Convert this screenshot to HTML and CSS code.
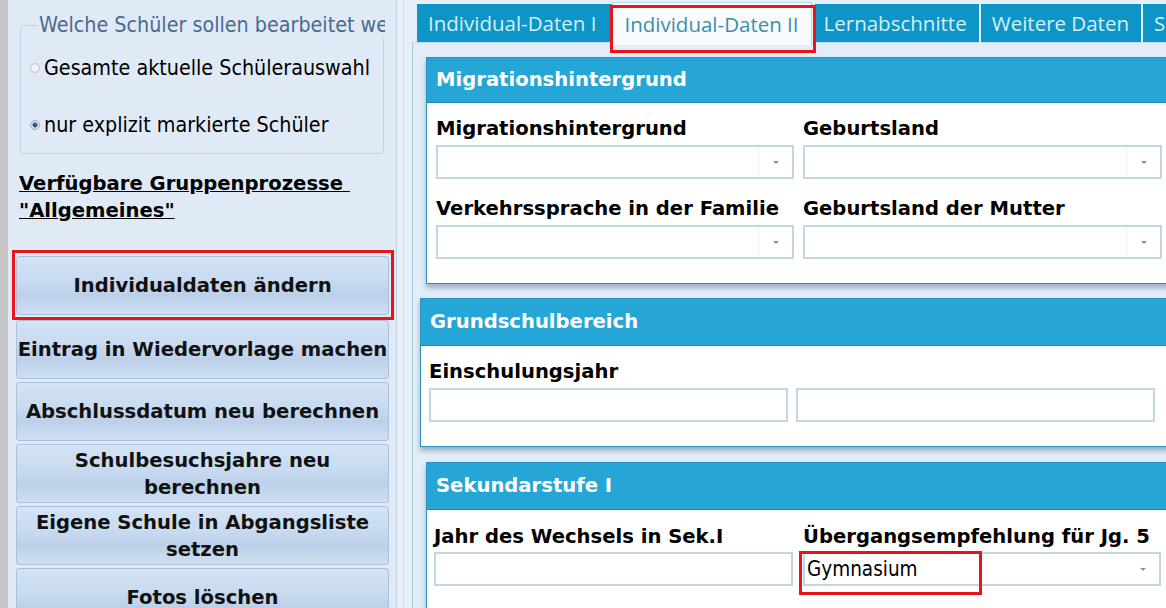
FILE: index.html
```html
<!DOCTYPE html>
<html lang="de">
<head>
    <meta charset="UTF-8">
    <meta name="viewport" content="width=device-width, initial-scale=1.0">
    <title>Gruppenprozesse - Individualdaten</title>
    <link rel="stylesheet" href="styles.css">
</head>
<body>
    <div class="side">
        <fieldset class="choose">
            <legend>Welche Schüler sollen bearbeitet werden?</legend>
            <div class="radio-row"><span class="radio"></span>Gesamte aktuelle Schülerauswahl</div>
            <div class="radio-row"><span class="radio checked"></span>nur explizit markierte Schüler</div>
        </fieldset>
        <h2 class="proc-title">Verfügbare Gruppenprozesse&nbsp;<br>"Allgemeines"</h2>
        <div class="actions">
            <button class="action first marked">Individualdaten ändern</button>
            <button class="action">Eintrag in Wiedervorlage machen</button>
            <button class="action">Abschlussdatum neu berechnen</button>
            <button class="action">Schulbesuchsjahre neu<br>berechnen</button>
            <button class="action">Eigene Schule in Abgangsliste<br>setzen</button>
            <button class="action">Fotos löschen</button>
        </div>
    </div>

    <div class="main">
        <div class="tabs">
            <div class="tab">Individual-Daten I</div>
            <div class="tab active marked">Individual-Daten II</div>
            <div class="tab">Lernabschnitte</div>
            <div class="tab">Weitere Daten</div>
            <div class="tab">Sekundarstufe</div>
        </div>
        <div class="page">
            <section class="group">
                <div class="group-head">Migrationshintergrund</div>
                <div class="fields">
                    <div class="field">
                        <label>Migrationshintergrund</label>
                        <div class="combo"><span class="combo-btn"></span></div>
                    </div>
                    <div class="field">
                        <label>Geburtsland</label>
                        <div class="combo"><span class="combo-btn"></span></div>
                    </div>
                    <div class="field">
                        <label>Verkehrssprache in der Familie</label>
                        <div class="combo"><span class="combo-btn"></span></div>
                    </div>
                    <div class="field">
                        <label>Geburtsland der Mutter</label>
                        <div class="combo"><span class="combo-btn"></span></div>
                    </div>
                </div>
            </section>

            <section class="group school">
                <div class="group-head">Grundschulbereich</div>
                <div class="fields">
                    <div class="field">
                        <label>Einschulungsjahr</label>
                        <div class="input"></div>
                    </div>
                    <div class="field">
                        <label>&nbsp;</label>
                        <div class="input"></div>
                    </div>
                </div>
            </section>

            <section class="group sek">
                <div class="group-head">Sekundarstufe I</div>
                <div class="fields">
                    <div class="field">
                        <label>Jahr des Wechsels in Sek.I</label>
                        <div class="input"></div>
                    </div>
                    <div class="field">
                        <label>Übergangsempfehlung für Jg. 5</label>
                        <div class="combo marked"><span class="combo-value">Gymnasium</span><span class="combo-btn"></span></div>
                    </div>
                </div>
            </section>
        </div>
    </div>
</body>
</html>
```

FILE: styles.css
```css
*, *::before, *::after {
    box-sizing: border-box;
}
body {
    margin: 0;
    height: 608px;
    overflow: hidden;
    display: flex;
    background: #e2ecf8;
    font-family: "DejaVu Sans Condensed", "DejaVu Sans", Tahoma, sans-serif;
    font-size: 21.3px;
    color: #000;
}

/* left panel */
.side {
    width: 397px;
    flex: none;
    border-left: 8px solid #c6c6c6;
    border-right: 1px solid #c4d3e5;
    background: #e0eaf7;
    padding-top: 12px;
}
.choose {
    margin: 0 12px;
    min-width: 0;
    padding: 17px 0 15px 9px;
    border: 1px solid #c3d3e5;
    border-radius: 4px;
}
.choose legend {
    margin-left: 8px;
    padding: 0 1px;
    max-width: 347px;
    white-space: nowrap;
    overflow: hidden;
    color: #4b6a8e;
    line-height: 26px;
}
.radio-row {
    display: flex;
    align-items: center;
    gap: 4px;
    line-height: 26px;
}
.radio-row + .radio-row {
    margin-top: 31px;
}
.radio {
    width: 10px;
    height: 10px;
    border-radius: 50%;
    border: 1px solid #c2c8cf;
    background: radial-gradient(circle, #f4f5f6 0 2px, #dde1e5 5px);
}
.radio.checked {
    border-color: #9aa8b8;
    background: radial-gradient(circle, #34578a 0 2px, #dfe6ef 3px);
}
.proc-title,
.action,
.group-head,
.field label {
    font-family: "DejaVu Sans", Tahoma, sans-serif;
    font-size: 19.6px;
    font-weight: bold;
}
.proc-title {
    margin: 16px 0 0 11px;
    line-height: 27px;
    text-decoration: underline;
}
.actions {
    display: flex;
    flex-direction: column;
    gap: 3px;
    margin-top: 32px;
    padding: 0 7px 0 8px;
}
.action {
    height: 59px;
    padding: 0;
    border: 1px solid #aac1da;
    border-radius: 3px;
    background: linear-gradient(#d4e3f5 0%, #c9dbf0 40%, #bdd0e9 68%, #cfdff3 100%);
    line-height: 27px;
    color: #111;
    white-space: nowrap;
    overflow: hidden;
}
.action.first {
    margin-bottom: 2px;
}

/* red highlight frames */
.marked {
    position: relative;
    overflow: visible;
}
.marked::after {
    content: "";
    position: absolute;
    border: 3px solid #e8141b;
    pointer-events: none;
}
.action.marked::after {
    left: -5px;
    right: -6px;
    top: -7px;
    bottom: -6px;
}
.tab.marked::after {
    left: -3px;
    right: -5px;
    top: 2px;
    bottom: -8px;
}
.combo.marked::after {
    left: -6px;
    top: -3px;
    width: 183px;
    height: 44px;
}

/* right part */
.main {
    flex: 1;
    min-width: 0;
    display: flex;
    flex-direction: column;
    padding-left: 15px;
    background: linear-gradient(90deg, #e7eff9 6px, #d5e0ec 6px 7px, #e7eff9 7px);
}
.tabs {
    display: flex;
    align-items: flex-start;
    height: 38px;
    margin: 4px 0 0 5px;
    white-space: nowrap;
}
.tab {
    height: 38px;
    padding: 0 12px 0 11px;
    background: #0c95c6;
    color: #d6eef8;
    font-family: "Open Sans", "Noto Sans", sans-serif;
    font-size: 20.5px;
    line-height: 38px;
}
.tab:first-child {
    padding-right: 16px;
}
.tab + .tab {
    border-left: 2px solid #e9f4fa;
}
.tab.active {
    z-index: 1;
    height: 43px;
    margin-top: -2px;
    background: #f7fbfe;
    color: #3c8fae;
    border: 1px solid #bcd5e5;
    border-bottom: none;
    line-height: 42px;
}
.tab.active + .tab {
    border-left-width: 3px;
    padding-left: 9px;
}
.page {
    flex: 1;
    min-height: 0;
    overflow: hidden;
    padding: 14px 0 0 13px;
    background: #e3edf9;
    border-left: 1px solid #a9c6db;
    border-top: 1px solid #c9dced;
}

/* group boxes */
.group {
    width: 800px;
    margin-bottom: 14px;
    background: #fff;
    border: 1px solid #2a93bf;
    box-shadow: 0 4px 5px rgba(70, 100, 130, 0.45);
}
.group-head {
    height: 45px;
    padding-left: 9px;
    background: #26a6d6;
    border-bottom: 1px solid #1b8ab6;
    color: #fff;
    line-height: 44px;
}
.fields {
    display: grid;
    grid-template-columns: 358px 359px;
    column-gap: 9px;
    row-gap: 18px;
    padding: 14px 0 24px 9px;
}
.field label {
    display: block;
    margin-bottom: 4px;
    line-height: 24px;
    white-space: nowrap;
}
.combo,
.input {
    height: 34px;
    border: 2px solid #c1d6e3;
    background: #fff;
}
.combo {
    display: flex;
    align-items: center;
}
.combo-value {
    flex: 1;
    padding-left: 2px;
    font-size: 20.5px;
    line-height: 30px;
}
.combo-btn {
    margin-left: auto;
    width: 34px;
    height: 100%;
    border-left: 1px solid #eef2f6;
    display: flex;
    align-items: center;
    justify-content: center;
}
.combo-btn::before {
    content: "";
    border-left: 3px solid transparent;
    border-right: 3px solid transparent;
    border-top: 3px solid #7f93a8;
}
.combo.marked .combo-btn {
    border-left-color: transparent;
}

.school {
    margin-left: -6px;
    margin-bottom: 15px;
}
.school .group-head {
    height: 47px;
    line-height: 46px;
}
.school .fields {
    grid-template-columns: 359px 359px;
    column-gap: 8px;
    padding: 14px 0 24px 8px;
}

.sek .group-head {
    height: 47px;
    line-height: 46px;
}
.sek .fields {
    grid-template-columns: 359px 358px;
    column-gap: 10px;
    padding: 15px 0 24px 7px;
}
.sek .field label {
    margin-bottom: 3px;
}
```
